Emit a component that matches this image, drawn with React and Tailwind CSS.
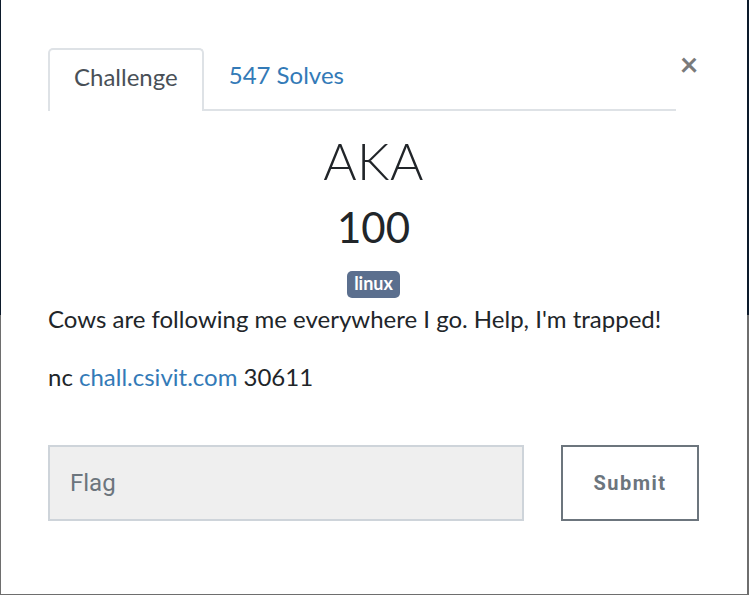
import React from 'react';

const App = () => {
  return (
    <div className="h-[595px] w-[749px] bg-[linear-gradient(to_bottom,#0c1a2b_315px,#6e6e6e_315px)] pl-px pr-[2px] pb-px font-['Lato',sans-serif]">
      <div className="h-full bg-white pl-[47px] pr-[48px] pt-[48px]">
        {/* tabs + close */}
        <div className="flex items-start">
          <ul className="flex flex-1 border-b-2 border-[#dee2e6]">
            <li className="-mb-[2px] h-[63px] rounded-t-[5px] border-2 border-b-0 border-[#dee2e6] bg-white px-[24px] pt-[11px] text-[24px] leading-[32px] text-[#495057]">
              Challenge
            </li>
            <li className="px-[25px] pt-[11px] text-[24px] leading-[32px] text-[#337ab7]">547 Solves</li>
          </ul>
          <button className="ml-[3px] w-[20px] text-[32px] font-bold leading-none text-[#7a7a7a]">×</button>
        </div>

        {/* heading */}
        <div className="flex flex-col items-center">
          <h2 className="mt-[20px] text-[51px] font-light leading-[60px] tracking-[0.5px] text-[#212529]">AKA</h2>
          <h3 className="mt-[9px] text-[42px] leading-[54px] text-[#212529]">100</h3>
          <span className="mt-[17px] rounded-[5px] bg-[#5b6f8e] px-[7px] pb-[2px] text-[18px] font-bold leading-[25px] text-white">
            linux
          </span>
        </div>

        {/* description */}
        <div className="text-[24px] leading-[34px] text-[#212529]">
          <p className="mt-[4px]">Cows are following me everywhere I go. Help, I'm trapped!</p>
          <p className="mt-[24px]">
            nc <a className="text-[#337ab7]">chall.csivit.com</a> 30611
          </p>
        </div>

        {/* flag form */}
        <div className="mt-[51px] flex gap-[37px]">
          <input
            placeholder="Flag"
            className="h-[76px] flex-1 border-2 border-[#ced4da] bg-[#efefef] px-[20px] font-['Roboto',sans-serif] text-[24px] text-[#495057] outline-none placeholder:text-[#6c757d]"
          />
          <button className="h-[76px] w-[138px] border-2 border-[#6c757d] bg-white font-['Roboto',sans-serif] text-[20px] font-bold tracking-[1.5px] text-[#6c757d]">
            Submit
          </button>
        </div>
      </div>
    </div>
  );
};

export default App;
